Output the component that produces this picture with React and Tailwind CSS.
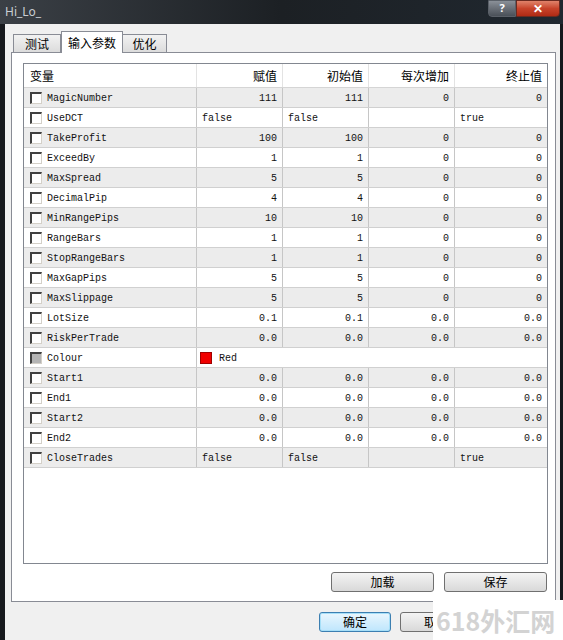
import React from 'react';

const cjk = '"Noto Sans CJK SC", "Noto Sans", sans-serif';
const mono = '"Liberation Mono", "Noto Sans CJK SC", monospace';

// each row: name, value, start, step, stop
const params = [
  ['MagicNumber', '111', '111', '0', '0'],
  ['UseDCT', 'false', 'false', '', 'true'],
  ['TakeProfit', '100', '100', '0', '0'],
  ['ExceedBy', '1', '1', '0', '0'],
  ['MaxSpread', '5', '5', '0', '0'],
  ['DecimalPip', '4', '4', '0', '0'],
  ['MinRangePips', '10', '10', '0', '0'],
  ['RangeBars', '1', '1', '0', '0'],
  ['StopRangeBars', '1', '1', '0', '0'],
  ['MaxGapPips', '5', '5', '0', '0'],
  ['MaxSlippage', '5', '5', '0', '0'],
  ['LotSize', '0.1', '0.1', '0.0', '0.0'],
  ['RiskPerTrade', '0.0', '0.0', '0.0', '0.0'],
  ['Colour', 'color'],
  ['Start1', '0.0', '0.0', '0.0', '0.0'],
  ['End1', '0.0', '0.0', '0.0', '0.0'],
  ['Start2', '0.0', '0.0', '0.0', '0.0'],
  ['End2', '0.0', '0.0', '0.0', '0.0'],
  ['CloseTrades', 'false', 'false', '', 'true'],
];

const isText = (v) => v === 'false' || v === 'true';

const Check = ({ disabled }) => (
  <span
    className={`w-[12px] h-[12px] shrink-0 border-t-[2px] border-l-[2px] border-b border-r border-t-[#404040] border-l-[#404040] border-b-[#d4d0c8] border-r-[#d4d0c8] ${
      disabled ? 'bg-[#b4b4b4]' : 'bg-white'
    }`}
  />
);

const Cell = ({ v, w, last }) => (
  <div
    className={`${w} h-full flex items-center px-[5px] pt-[2px] ${isText(v) ? 'justify-start' : 'justify-end'} ${
      last ? '' : 'border-r border-[#c6c6c6]'
    }`}
  >
    {v}
  </div>
);

const Row = ({ p, i }) => {
  const bg = i % 2 === 0 ? 'bg-[#ececec]' : 'bg-white';
  return (
    <div className={`h-[20px] flex border-b border-[#d0d0d0] ${bg} text-[10px] text-[#111]`} style={{ fontFamily: mono }}>
      <div className="w-[173px] h-full flex items-center gap-[5px] pl-[6px] border-r border-[#c6c6c6]">
        <Check disabled={p[1] === 'color'} />
        <span className="pt-[2px]">{p[0]}</span>
      </div>
      {p[1] === 'color' ? (
        <div className="flex-1 flex items-center gap-[7px] pl-[3px]">
          <span className="w-[12px] h-[12px] bg-[#f00000] border border-[#a00000]" />
          <span className="pt-[2px]">Red</span>
        </div>
      ) : (
        <>
          <Cell v={p[1]} w="w-[86px]" />
          <Cell v={p[2]} w="w-[86px]" />
          <Cell v={p[3]} w="w-[86px]" />
          <Cell v={p[4]} w="flex-1" last />
        </>
      )}
    </div>
  );
};

const Btn = ({ label, w, primary }) => (
  <button
    className={`${w} h-[20px] rounded-[3px] border text-[12px] text-black leading-none ${
      primary
        ? 'border-[#3c7fb1] bg-gradient-to-b from-[#eaf6fd] to-[#bee6fd] shadow-[inset_0_0_0_1px_#a6dff8]'
        : 'border-[#707070] bg-gradient-to-b from-[#f4f4f4] to-[#d9d9d9]'
    }`}
    style={{ fontFamily: cjk }}
  >
    {label}
  </button>
);

export default function App() {
  return (
    <div className="relative w-[563px] h-[640px] overflow-hidden flex flex-col bg-[#16191d]">
      {/* title bar */}
      <div className="h-[24px] flex items-start bg-gradient-to-r from-[#3b4046] via-[#1c2024] to-[#202830]">
        <span className="pl-[5px] pt-[3px] text-[12px] text-[#c9ced3]" style={{ fontFamily: '"Noto Sans", sans-serif' }}>
          Hi_Lo_
        </span>
        <div className="ml-auto mr-[3px] flex">
          <div className="w-[28px] h-[17px] rounded-bl-[4px] border border-[#5a6068] bg-gradient-to-b from-[#8a9098] to-[#4a5058] flex items-center justify-center text-white text-[11px] font-bold">
            ?
          </div>
          <div className="w-[44px] h-[17px] rounded-br-[4px] border border-[#6a2a20] bg-gradient-to-b from-[#e0826a] via-[#c7432a] to-[#b02a14] flex items-center justify-center text-white text-[12px] font-bold">
            ✕
          </div>
        </div>
      </div>

      <div className="flex-1 flex pl-[5px] pr-[3px]">
        <div className="flex-1 bg-[#f0f0f0] flex flex-col pl-[6px] pr-[4px] pt-[6px]">
          {/* tabs */}
          <div className="h-[22px] flex items-end text-[12px] text-black" style={{ fontFamily: cjk }}>
            <div className="h-[18px] w-[48px] ml-[2px] border border-b-0 border-[#898c95] bg-gradient-to-b from-[#f2f2f2] to-[#dcdcdc] flex items-center justify-center">
              测试
            </div>
            <div className="h-[22px] w-[62px] border border-b-0 border-[#898c95] bg-white flex items-center justify-center -mb-px relative z-10">
              输入参数
            </div>
            <div className="h-[18px] w-[44px] border border-b-0 border-l-0 border-[#898c95] bg-gradient-to-b from-[#f2f2f2] to-[#dcdcdc] flex items-center justify-center">
              优化
            </div>
          </div>

          {/* tab page */}
          <div className="h-[550px] border border-[#898c95] bg-white flex flex-col pl-[11px] pr-[7px] pt-[10px]">
            <div className="h-[501px] border border-[#828790] flex flex-col">
              <div className="h-[24px] flex border-b border-[#d5d5d5] text-[12px] text-black" style={{ fontFamily: cjk }}>
                <div className="w-[173px] flex items-center pl-[6px] border-r border-[#e3e3e3]">变量</div>
                <div className="w-[86px] flex items-center justify-end pr-[5px] border-r border-[#e3e3e3]">赋值</div>
                <div className="w-[86px] flex items-center justify-end pr-[5px] border-r border-[#e3e3e3]">初始值</div>
                <div className="w-[86px] flex items-center justify-end pr-[5px] border-r border-[#e3e3e3]">每次增加</div>
                <div className="flex-1 flex items-center justify-end pr-[5px]">终止值</div>
              </div>
              {params.map((p, i) => (
                <Row key={p[0]} p={p} i={i} />
              ))}
            </div>
            <div className="flex justify-end gap-[10px] pr-[1px] pt-[8px]">
              <Btn label="加载" w="w-[103px]" />
              <Btn label="保存" w="w-[103px]" />
            </div>
          </div>

          {/* dialog buttons */}
          <div className="flex justify-end gap-[9px] pt-[10px] pr-[84px]">
            <Btn label="确定" w="w-[72px]" primary />
            <Btn label="取消" w="w-[72px]" />
          </div>
        </div>
      </div>

      {/* watermark */}
      <div
        className="absolute left-[433px] top-[600px] w-[130px] h-[40px] bg-white flex items-center pl-[3px] text-[25px] font-bold text-[#d3d3d3] leading-none whitespace-nowrap"
        style={{ fontFamily: cjk }}
      >
        618外汇网
      </div>
    </div>
  );
}
